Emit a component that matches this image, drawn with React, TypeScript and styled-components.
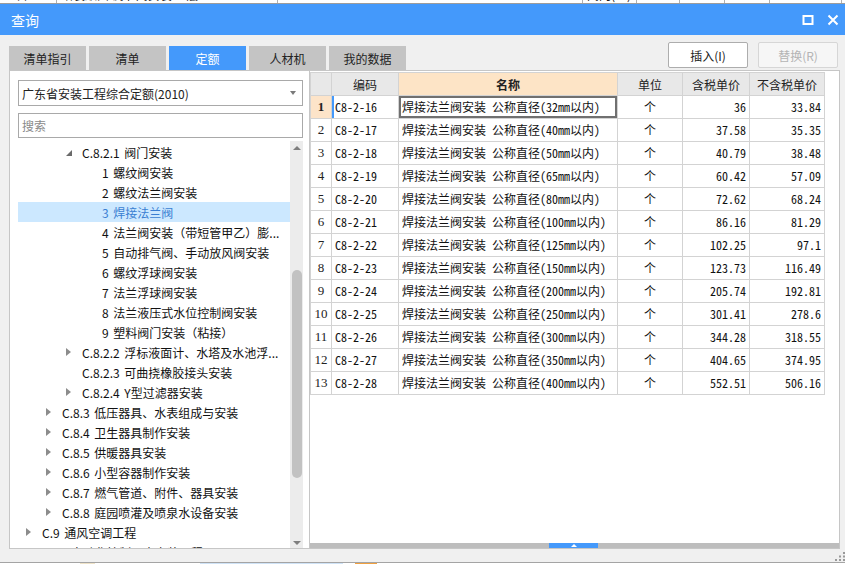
import React from 'react'
import styled, { createGlobalStyle } from 'styled-components'

const BLUE = '#4499fb'
const UI_FONT = `"Noto Sans CJK SC", "Noto Sans", sans-serif`
const GRID_FONT = `"Noto Sans Mono CJK SC", "Liberation Mono", "Noto Sans CJK SC", monospace`
const LINE = '#d3d3d3'

type Node = { level: number; text: string; arrow?: 'open' | 'closed'; selected?: boolean }

const tree: Node[] = [
	{ level: 2, arrow: 'open', text: 'C.8.2.1 阀门安装' },
	{ level: 3, text: '1 螺纹阀安装' },
	{ level: 3, text: '2 螺纹法兰阀安装' },
	{ level: 3, text: '3 焊接法兰阀', selected: true },
	{ level: 3, text: '4 法兰阀安装（带短管甲乙）膨...' },
	{ level: 3, text: '5 自动排气阀、手动放风阀安装' },
	{ level: 3, text: '6 螺纹浮球阀安装' },
	{ level: 3, text: '7 法兰浮球阀安装' },
	{ level: 3, text: '8 法兰液压式水位控制阀安装' },
	{ level: 3, text: '9 塑料阀门安装（粘接）' },
	{ level: 2, arrow: 'closed', text: 'C.8.2.2 浮标液面计、水塔及水池浮...' },
	{ level: 2, text: 'C.8.2.3 可曲挠橡胶接头安装' },
	{ level: 2, arrow: 'closed', text: 'C.8.2.4 Y型过滤器安装' },
	{ level: 1, arrow: 'closed', text: 'C.8.3 低压器具、水表组成与安装' },
	{ level: 1, arrow: 'closed', text: 'C.8.4 卫生器具制作安装' },
	{ level: 1, arrow: 'closed', text: 'C.8.5 供暖器具安装' },
	{ level: 1, arrow: 'closed', text: 'C.8.6 小型容器制作安装' },
	{ level: 1, arrow: 'closed', text: 'C.8.7 燃气管道、附件、器具安装' },
	{ level: 1, arrow: 'closed', text: 'C.8.8 庭园喷灌及喷泉水设备安装' },
	{ level: 0, arrow: 'closed', text: 'C.9 通风空调工程' },
	{ level: 0, arrow: 'closed', text: 'C.10 自动化控制仪表安装工程' },
]

// code suffix, size in mm, price with tax, price without tax
const rows: [number, number, string, string][] = [
	[16, 32, '36', '33.84'],
	[17, 40, '37.58', '35.35'],
	[18, 50, '40.79', '38.48'],
	[19, 65, '60.42', '57.09'],
	[20, 80, '72.62', '68.24'],
	[21, 100, '86.16', '81.29'],
	[22, 125, '102.25', '97.1'],
	[23, 150, '123.73', '116.49'],
	[24, 200, '205.74', '192.81'],
	[25, 250, '301.41', '278.6'],
	[26, 300, '344.28', '318.55'],
	[27, 350, '404.65', '374.95'],
	[28, 400, '552.51', '506.16'],
]

const tabs = ['清单指引', '清单', '定额', '人材机', '我的数据']

export default function App() {
	return (
		<Frame>
			<GlobalStyle />
			<UnderStrip>
				<UnderCell $w={57}>　日</UnderCell>
				<UnderCell $w={221}>暗装顺面 调节阀安装 一层</UnderCell>
				<UnderCell $w={305}></UnderCell>
				<UnderCell $w={54}>阀门(个)</UnderCell>
				<UnderCell $w={43}></UnderCell>
				<UnderCell $w={45}>10.0</UnderCell>
				<UnderCell $w={45}></UnderCell>
				<UnderCell $w={72}>　　121.406</UnderCell>
			</UnderStrip>

			<TitleBar>
				<Title>查询</Title>
				<WinIcon width="12" height="12" viewBox="0 0 12 12">
					<rect x="1.5" y="2" width="9" height="8" fill="none" stroke="#fff" strokeWidth="2" />
				</WinIcon>
				<WinIcon width="12" height="12" viewBox="0 0 12 12">
					<path d="M1.5 1.5 L10.5 10.5 M10.5 1.5 L1.5 10.5" stroke="#fff" strokeWidth="2" />
				</WinIcon>
			</TitleBar>

			<ToolRow>
				<Tabs>
					{tabs.map((t) => (
						<Tab key={t} $active={t == '定额'}>
							{t}
						</Tab>
					))}
				</Tabs>
				<Actions>
					<ActionButton>插入(I)</ActionButton>
					<ActionButton $disabled>替换(R)</ActionButton>
				</Actions>
			</ToolRow>

			<Panels>
				<LeftPanel>
					<Select>
						<span>广东省安装工程综合定额(2010)</span>
						<DownCaret />
					</Select>
					<Search placeholder="搜索" />
					<TreeArea>
						<TreeList>
							{tree.map((n) => (
								<TreeRow key={n.text} $level={n.level} $selected={n.selected}>
									<ArrowSlot>
										{n.arrow == 'open' && <OpenArrow />}
										{n.arrow == 'closed' && <ClosedArrow />}
									</ArrowSlot>
									<TreeLabel>{n.text}</TreeLabel>
								</TreeRow>
							))}
						</TreeList>
						<VScroll>
							<UpCaret />
							<Thumb />
							<DownScrollCaret />
						</VScroll>
					</TreeArea>
				</LeftPanel>

				<RightPanel>
					<Grid>
						<HeadCell />
						<HeadCell>编码</HeadCell>
						<HeadCell $accent>名称</HeadCell>
						<HeadCell>单位</HeadCell>
						<HeadCell>含税单价</HeadCell>
						<HeadCell>不含税单价</HeadCell>

						{rows.map(([code, size, tax, noTax], i) => {
							const current = i == 0
							return (
								<React.Fragment key={code}>
									<NumCell $current={current}>{i + 1}</NumCell>
									<Cell $marker={current}>C8-2-{code}</Cell>
									<Cell $focused={current}>
										焊接法兰阀安装 公称直径({size}mm以内)
									</Cell>
									<Cell $align="center">个</Cell>
									<Cell $align="right">{tax}</Cell>
									<Cell $align="right">{noTax}</Cell>
								</React.Fragment>
							)
						})}
					</Grid>
					<HBar>
						<Knob>
							<KnobCaret />
						</Knob>
					</HBar>
				</RightPanel>
			</Panels>

			<Foot>
				<svg width="10" height="9" viewBox="0 0 10 9">
					<rect x="8" y="0" width="2" height="2" fill="#9a9a9a" />
					<rect x="4" y="3.5" width="2" height="2" fill="#9a9a9a" />
					<rect x="8" y="3.5" width="2" height="2" fill="#9a9a9a" />
					<rect x="0" y="7" width="2" height="2" fill="#9a9a9a" />
					<rect x="4" y="7" width="2" height="2" fill="#9a9a9a" />
					<rect x="8" y="7" width="2" height="2" fill="#9a9a9a" />
				</svg>
			</Foot>

			<BottomStrip>
				<StripBlock $w={80} />
				<StripBlock $w={15} $color="#efe3c8" />
				<StripBlock $w={105} />
				<StripBlock $w={143} $color="#cfe3f7" />
				<StripBlock $w={12} />
				<StripBlock $w={22} $color="#f0a040" />
			</BottomStrip>
		</Frame>
	)
}

const GlobalStyle = createGlobalStyle`
	body {
		margin: 0;
		background: #f0f0f0;
		font-family: ${UI_FONT};
	}
	* {
		box-sizing: border-box;
	}
`

const Frame = styled.div`
	width: 845px;
	height: 564px;
	display: flex;
	flex-direction: column;
	overflow: hidden;
	background: #f0f0f0;
	color: #1e1e1e;
`

const UnderStrip = styled.div`
	height: 4px;
	flex: none;
	display: flex;
	overflow: hidden;
	background: #fff;
	border-bottom: 1px solid #9c9c9c;
`

const UnderCell = styled.div<{ $w: number }>`
	width: ${(p) => p.$w}px;
	flex: none;
	height: 16px;
	margin-top: -12px;
	padding-left: 4px;
	border-right: 1px solid #b0b0b0;
	font: 12px/14px ${UI_FONT};
	white-space: nowrap;
	color: #111;
`

const TitleBar = styled.div`
	height: 31px;
	flex: none;
	display: flex;
	align-items: center;
	gap: 13px;
	padding: 0 6px 0 11px;
	background: ${BLUE};
	color: #fff;
`

const Title = styled.div`
	flex: 1;
	font: 14px ${UI_FONT};
`

const WinIcon = styled.svg`
	display: block;
`

const ToolRow = styled.div`
	height: 35px;
	flex: none;
	display: flex;
	padding: 0 7px 0 9px;
`

const Tabs = styled.div`
	flex: 1;
	display: flex;
	gap: 3px;
	margin-top: 11px;
`

const Tab = styled.div<{ $active?: boolean }>`
	width: 77px;
	height: 24px;
	display: flex;
	align-items: center;
	justify-content: center;
	font: 12px ${UI_FONT};
	background: ${(p) => (p.$active ? BLUE : '#c4c4c4')};
	color: ${(p) => (p.$active ? '#fff' : '#222')};
`

const Actions = styled.div`
	display: flex;
	gap: 10px;
	margin-top: 7px;
`

const ActionButton = styled.button<{ $disabled?: boolean }>`
	width: 80px;
	height: 26px;
	padding: 0;
	border-radius: 2px;
	font: 12px ${UI_FONT};
	background: ${(p) => (p.$disabled ? '#f6f6f6' : '#fff')};
	border: 1px solid ${(p) => (p.$disabled ? '#d6d6d6' : '#adadad')};
	color: ${(p) => (p.$disabled ? '#b4b4b4' : '#222')};
`

const Panels = styled.div`
	height: 479px;
	flex: none;
	display: flex;
	padding-left: 9px;
`

const LeftPanel = styled.div`
	width: 300px;
	display: flex;
	flex-direction: column;
	padding: 9px 6px 0 8px;
	background: #fff;
	border: 1px solid #c6c6c6;
	border-right: none;
`

const Select = styled.div`
	height: 26px;
	flex: none;
	display: flex;
	align-items: center;
	justify-content: space-between;
	padding: 0 6px 0 3px;
	border: 1px solid #a9a9a9;
	font: 12px ${UI_FONT};
	color: #222;
`

const DownCaret = styled.span`
	width: 0;
	height: 0;
	border-left: 3.5px solid transparent;
	border-right: 3.5px solid transparent;
	border-top: 4px solid #7a7a7a;
`

const Search = styled.input`
	height: 25px;
	flex: none;
	margin-top: 7px;
	padding: 0 3px;
	border: 1px solid #a9a9a9;
	outline: none;
	font: 12px ${UI_FONT};

	&::placeholder {
		color: #8a8a8a;
	}
`

const TreeArea = styled.div`
	flex: 1;
	min-height: 0;
	display: flex;
	margin-top: 3px;
`

const TreeList = styled.div`
	flex: 1;
	overflow: hidden;
	padding-top: 1px;
`

const TreeRow = styled.div<{ $level: number; $selected?: boolean }>`
	height: 20px;
	display: flex;
	align-items: center;
	padding-left: ${(p) => 4 + p.$level * 20}px;
	background: ${(p) => (p.$selected ? '#cce8ff' : 'transparent')};
	color: ${(p) => (p.$selected ? '#3a7fd2' : '#111')};
`

const ArrowSlot = styled.span`
	width: 20px;
	flex: none;
	display: flex;
	align-items: center;
	padding-left: 4px;
`

const OpenArrow = styled.span`
	width: 0;
	height: 0;
	border-left: 6px solid transparent;
	border-bottom: 6px solid #6a6a6a;
	margin-top: 2px;
`

const ClosedArrow = styled.span`
	width: 0;
	height: 0;
	border-top: 4.5px solid transparent;
	border-bottom: 4.5px solid transparent;
	border-left: 5px solid #8c8c8c;
`

const TreeLabel = styled.span`
	font: 12px ${UI_FONT};
	white-space: nowrap;
	word-spacing: 2px;
`

const VScroll = styled.div`
	width: 13px;
	flex: none;
	display: flex;
	flex-direction: column;
	align-items: center;
	background: #ececec;
`

const UpCaret = styled.span`
	margin-top: 5px;
	width: 0;
	height: 0;
	border-left: 4px solid transparent;
	border-right: 4px solid transparent;
	border-bottom: 4px solid #7e7e7e;
`

const Thumb = styled.div`
	width: 10px;
	height: 208px;
	margin-top: 120px;
	border-radius: 5px;
	background: #c2c2c2;
`

const DownScrollCaret = styled.span`
	margin-top: auto;
	margin-bottom: 3px;
	width: 0;
	height: 0;
	border-left: 4px solid transparent;
	border-right: 4px solid transparent;
	border-top: 4px solid #7e7e7e;
`

const RightPanel = styled.div`
	width: 531px;
	display: flex;
	flex-direction: column;
	background: #fff;
	border: 1px solid #c6c6c6;
`

const Grid = styled.div`
	display: grid;
	grid-template-columns: 21px 67px 219px 65px 67px 75px;
	grid-auto-rows: 23px;
	width: max-content;
	margin-top: 1px;
	border-top: 1px solid ${LINE};
	border-left: 1px solid ${LINE};
`

const HeadCell = styled.div<{ $accent?: boolean }>`
	display: flex;
	align-items: center;
	justify-content: center;
	border-right: 1px solid ${LINE};
	border-bottom: 1px solid ${LINE};
	background: ${(p) => (p.$accent ? '#fde4c6' : '#e8e8e8')};
	font: ${(p) => (p.$accent ? 'bold ' : '')}12px ${UI_FONT};
	color: #222;
`

const NumCell = styled.div<{ $current?: boolean }>`
	display: flex;
	align-items: center;
	justify-content: center;
	border-right: 1px solid ${LINE};
	border-bottom: 1px solid ${LINE};
	background: ${(p) => (p.$current ? '#fde4c9' : '#fff')};
	font: ${(p) => (p.$current ? 'bold ' : '')}13px "Liberation Serif", serif;
	color: #222;
`

const Cell = styled.div<{
	$align?: 'left' | 'center' | 'right'
	$marker?: boolean
	$focused?: boolean
}>`
	padding: 0 3px;
	line-height: 22px;
	text-align: ${(p) => p.$align || 'left'};
	white-space: nowrap;
	overflow: hidden;
	border-right: 1px solid ${LINE};
	border-bottom: 1px solid ${LINE};
	font: 12px/22px ${GRID_FONT};
	color: #111;
	box-shadow: ${(p) =>
		p.$marker
			? `inset 2px 0 0 ${BLUE}`
			: p.$focused
			? 'inset 0 0 0 2px #707070'
			: 'none'};
`

const HBar = styled.div`
	margin-top: auto;
	height: 5px;
	flex: none;
	display: flex;
	background: #bdbdbd;
`

const Knob = styled.div`
	width: 49px;
	margin-left: 239px;
	display: flex;
	align-items: center;
	justify-content: center;
	background: ${BLUE};
`

const KnobCaret = styled.span`
	width: 0;
	height: 0;
	border-left: 3px solid transparent;
	border-right: 3px solid transparent;
	border-bottom: 3px solid #fff;
`

const Foot = styled.div`
	height: 13px;
	flex: none;
	display: flex;
	justify-content: flex-end;
	padding-top: 3px;
`

const BottomStrip = styled.div`
	height: 2px;
	flex: none;
	display: flex;
	border-top: 1px solid #a4a4a4;
	background: #fff;
`

const StripBlock = styled.div<{ $w: number; $color?: string }>`
	width: ${(p) => p.$w}px;
	flex: none;
	background: ${(p) => p.$color || 'transparent'};
`
